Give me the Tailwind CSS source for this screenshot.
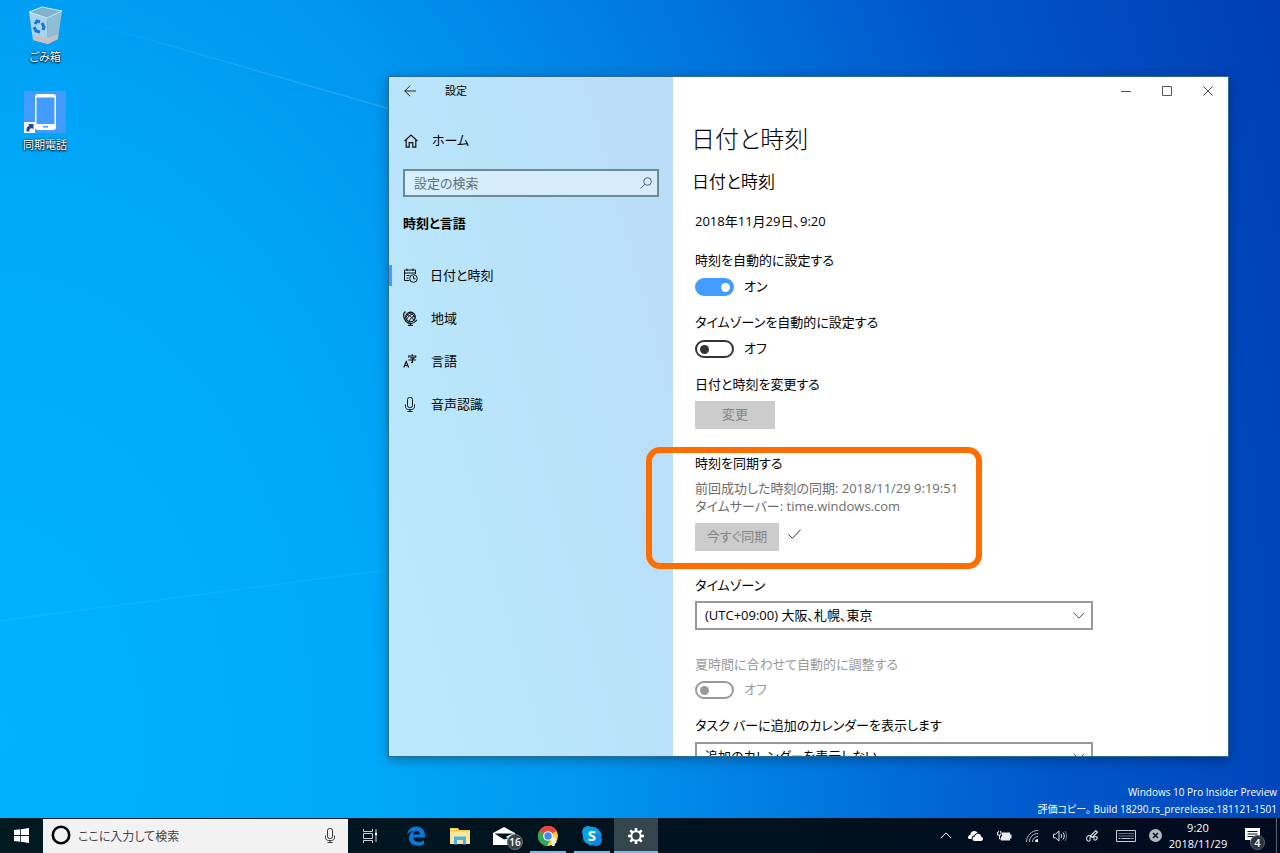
<!DOCTYPE html>
<html lang="ja">
<head>
    <meta charset="UTF-8">
    <meta name="viewport" content="width=device-width, initial-scale=1.0">
    <title>設定</title>
    <script src="https://cdn.jsdelivr.net/npm/@tailwindcss/browser@4"></script>
</head>
<body class="h-screen flex flex-col overflow-hidden font-['Open_Sans','Noto_Sans_CJK_JP',sans-serif] [font-feature-settings:'palt'] text-[13px] text-black">

    <!-- Desktop -->
    <main class="relative flex-1 min-h-0 bg-[radial-gradient(ellipse_112%_260%_at_0%_90%,#00b3fd_0%,#00a9f9_26%,#0096f0_41%,#0078de_57%,#0058ca_73%,#0042b8_92%,#003db2_100%)]">
        <svg class="absolute inset-0 w-full h-full" viewBox="0 0 1280 818" preserveAspectRatio="none" fill="#fff" aria-hidden="true">
            <path d="M60 14 L390 108 L390 110Z" fill-opacity=".12"/>
            <path d="M0 620 L390 569 L390 570 L0 622Z" fill-opacity=".06"/>
        </svg>

        <ul class="relative flex flex-col w-[90px] pt-[5px] gap-[26px] text-[11px] leading-4 text-white text-center [text-shadow:0_1px_2px_#000,0_0_2px_#000]">
            <li>
                <a href="#" class="flex flex-col items-center gap-1">
                    <svg class="w-10 h-10" viewBox="0 0 40 40" aria-hidden="true">
                        <path d="M4 7 L17 2 L37 6 L22 13Z" fill="#7fb3cf"/>
                        <path d="M4 7 L22 13 L23 39 L8 35Z" fill="#a9d3ea"/>
                        <path d="M22 13 L37 6 L33 34 L23 39Z" fill="#8fbdd6"/>
                        <path d="M8 30 L23 33 L33 29 L33 34 L23 39 L8 35Z" fill="#c9c0c2"/>
                        <path d="M4 7 L17 2 L37 6 L22 13Z" fill="none" stroke="#cfe4ef"/>
                        <g fill="none" stroke="#1578c8" stroke-width="3">
                            <path d="M10 19 L12 16 L15 17"/>
                            <path d="M17 18 L19 22 L18 25"/>
                            <path d="M15 27 L11 26 L9 22"/>
                        </g>
                    </svg>
                    <span>ごみ箱</span>
                </a>
            </li>
            <li>
                <a href="#" class="flex flex-col items-center gap-1">
                    <svg class="w-[42px] h-[42px]" viewBox="0 0 42 42" aria-hidden="true">
                        <rect width="42" height="42" fill="#429cff"/>
                        <path fill="#fff" fill-rule="evenodd" d="M14 3h15a3 3 0 0 1 3 3v30a3 3 0 0 1-3 3H14a3 3 0 0 1-3-3V6a3 3 0 0 1 3-3ZM12.500 6.500v26.500h18V6.500ZM19 35v1.500h5V35Z"/>
                        <rect x="0" y="31" width="11" height="11" fill="#f4f6f8"/>
                        <path d="M2.500 40.500c-.5-3.500.8-5.300 3-6L4 33h5.500v5.500L8 37c-2 .3-3 1.500-2.500 3.500Z" fill="#234a8c"/>
                    </svg>
                    <span>同期電話</span>
                </a>
            </li>
        </ul>

        <div class="absolute right-[3px] bottom-0 text-[10px] leading-[17px] text-white text-right">
            <p>Windows 10 Pro Insider Preview</p>
            <p>評価コピー。 Build 18290.rs_prerelease.181121-1501</p>
        </div>

        <!-- Settings window -->
        <div class="absolute left-[388px] right-[51px] top-[76px] bottom-[61px] flex border border-[#2f6a92] shadow-[0_3px_12px_rgba(0,0,0,0.3)]">
            <aside class="w-[284px] shrink-0 overflow-hidden bg-[linear-gradient(75deg,#b9eafb_0%,#b9e4fa_45%,#bbdcf7_100%)]">
                <div class="flex items-center h-7">
                    <button type="button" aria-label="戻る" class="w-[42px] h-7 grid place-items-center">
                        <svg class="w-3 h-3" viewBox="0 0 12 12" fill="none" stroke="#222" aria-hidden="true"><path d="M.5 6H12M6 .8.8 6 6 11.200"/></svg>
                    </button>
                    <span class="pl-[14px] text-[11px]">設定</span>
                </div>

                <a href="#" class="flex items-center h-8 mt-5 pl-[15px] gap-[14px]">
                    <svg class="w-[14px] h-[14px]" viewBox="0 0 14 14" fill="none" stroke="#111" stroke-width="1.200" aria-hidden="true"><path d="M.6 7 7 1l6.400 6M2.200 5.600v7.600h3V8.600h3.600v4.600h3V5.600"/></svg>
                    ホーム
                </a>

                <div class="relative mt-3 mx-[14px]">
                    <input type="text" aria-label="設定の検索" placeholder="設定の検索" class="block w-full h-7 pl-[9px] pr-8 border-2 border-[#6e8896] bg-white/40 placeholder:text-[#5f7079] outline-none">
                    <svg class="absolute right-[7px] top-2 w-3 h-3" viewBox="0 0 12 12" fill="none" stroke="#4e6470" aria-hidden="true"><circle cx="7.500" cy="4.500" r="3.800"/><path d="M4.800 7.200.5 11.500"/></svg>
                </div>

                <h2 class="mt-[14px] pl-[14px] leading-6 font-bold">時刻と言語</h2>

                <nav class="mt-[19px]">
                    <a href="#" class="relative flex items-center h-[43px] pl-[14px] gap-3" aria-current="page">
                        <span class="absolute left-0 w-[3px] h-[21px] bg-[#429cff]"></span>
                        <svg class="w-[15px] h-[15px]" viewBox="0 0 15 15" fill="none" stroke="#111" aria-hidden="true">
                            <path d="M6.500 12.500H1.500V2h11v4M1.500 5h11M4 .5V3M10 .5V3M3.500 7.500h3M3.500 10h2"/>
                            <circle cx="10.500" cy="10.500" r="3.800"/><path d="M10.500 8v2.800h2"/>
                        </svg>
                        日付と時刻
                    </a>
                    <a href="#" class="flex items-center h-[43px] pl-[14px] gap-[13px]">
                        <svg class="w-[15px] h-[15px]" viewBox="0 0 15 15" fill="none" stroke="#111" aria-hidden="true">
                            <circle cx="7.500" cy="6" r="4.800" stroke-width="1.200"/>
                            <path d="M3.500 3.500c3 .5 6 3 7.500 6M5.500 1.800c3 .5 5.500 2.500 6.500 5M11 2.500c-3 .5-6 3-7.500 6M12.200 5c-3 .5-5 2.500-6 5.500M8.500 1.200C6 2 4 4 2.900 6.500"/>
                            <path d="M2.500.5 1 2C-.2 6.500 2.500 12.300 7.800 12.500c2.200 0 3.700-.8 5-2.500l1-1M7.500 12.500v2M5 14.400h5" stroke-width="1.200"/>
                        </svg>
                        地域
                    </a>
                    <a href="#" class="flex items-center h-[43px] pl-[14px] gap-[13px]">
                        <svg class="w-[15px] h-[15px]" viewBox="0 0 15 15" fill="none" stroke="#111" stroke-width="1.200" aria-hidden="true">
                            <path d="M.8 13.500 3.200 7.500 5.600 13.500M1.700 11.500h3"/>
                            <path d="M9.200.3v1.500M5.700 3.500V2h7v1.500M7.200 3.800h4L9.400 5.200V8.500H8M5.300 6h7.800"/>
                        </svg>
                        言語
                    </a>
                    <a href="#" class="flex items-center h-[43px] pl-[14px] gap-[13px]">
                        <svg class="w-[15px] h-[15px]" viewBox="0 0 15 15" fill="none" stroke="#111" aria-hidden="true">
                            <rect x="4.500" y=".5" width="5" height="10" rx="2"/><path d="M2.500 7.500v2c0 2 1.500 3 3 3h3c1.500 0 3-1 3-3v-2M7 12.500v2M4.500 14.500h5"/>
                        </svg>
                        音声認識
                    </a>
                </nav>
            </aside>

            <section class="flex-1 min-w-0 overflow-hidden bg-white">
                <div class="flex justify-end h-7">
                    <button type="button" aria-label="最小化" class="w-[41px] grid place-items-center">
                        <svg class="w-[10px] h-[10px]" viewBox="0 0 10 10" stroke="#555" aria-hidden="true"><path d="M0 5.500h10"/></svg>
                    </button>
                    <button type="button" aria-label="最大化" class="w-[41px] grid place-items-center">
                        <svg class="w-[10px] h-[10px]" viewBox="0 0 10 10" fill="none" stroke="#555" aria-hidden="true"><path d="M.5.5h9v9h-9z"/></svg>
                    </button>
                    <button type="button" aria-label="閉じる" class="w-[41px] grid place-items-center">
                        <svg class="w-[10px] h-[10px]" viewBox="0 0 10 10" stroke="#444" aria-hidden="true"><path d="M.5.5l9 9M9.500.5l-9 9"/></svg>
                    </button>
                </div>

                <div class="pl-[22px] pr-[135px]">
                    <h1 class="mt-4 -ml-1 text-2xl leading-9 font-light">日付と時刻</h1>
                    <h2 class="mt-[11px] -ml-[3px] text-[17px] leading-7 font-[350]">日付と時刻</h2>
                    <p class="mt-[15px] leading-5">2018年11月29日、9:20</p>

                    <label for="autoTime" class="block mt-[19px] leading-5">時刻を自動的に設定する</label>
                    <div class="flex items-center gap-[10px] mt-2 h-[18px]">
                        <input type="checkbox" id="autoTime" checked class="appearance-none flex items-center justify-end w-[39px] h-[18px] px-1 rounded-full bg-[#429cff] before:content-[''] before:block before:w-[9px] before:h-[9px] before:rounded-full before:bg-white">
                        <span>オン</span>
                    </div>

                    <label for="autoZone" class="block mt-4 leading-5">タイムゾーンを自動的に設定する</label>
                    <div class="flex items-center gap-[10px] mt-2 h-[18px]">
                        <input type="checkbox" id="autoZone" class="appearance-none flex items-center w-[39px] h-[18px] px-[3px] border-2 border-[#333] rounded-full before:content-[''] before:block before:w-[9px] before:h-[9px] before:rounded-full before:bg-[#333]">
                        <span>オフ</span>
                    </div>

                    <p class="mt-4 leading-5">日付と時刻を変更する</p>
                    <button type="button" disabled class="block mt-[7px] w-20 h-7 bg-[#ccc] text-[#858585]">変更</button>

                    <h3 class="mt-6 leading-5">時刻を同期する</h3>
                    <p class="mt-[6px] leading-[18px] text-[#6d6d6d]">前回成功した時刻の同期: 2018/11/29 9:19:51<br>タイムサーバー: time.windows.com</p>
                    <div class="flex mt-2 gap-[9px]">
                        <button type="button" disabled class="w-[84px] h-7 bg-[#ccc] text-[#858585]">今すぐ同期</button>
                        <svg class="w-[13px] h-[10px] mt-[6px]" viewBox="0 0 13 10" fill="none" stroke="#333" aria-hidden="true"><path d="M.5 5.500 4.500 9.300 12.700.6"/></svg>
                    </div>

                    <label for="timezone" class="block mt-6 leading-5">タイムゾーン</label>
                    <div class="relative mt-[6px]">
                        <select id="timezone" class="appearance-none block w-full h-[29px] pl-2 pr-8 border-2 border-[#999] bg-white">
                            <option>(UTC+09:00) 大阪、札幌、東京</option>
                        </select>
                        <svg class="absolute right-2 top-[11px] w-3 h-[7px]" viewBox="0 0 12 7" fill="none" stroke="#555" aria-hidden="true"><path d="M.7.8 6 6.100 11.300.8"/></svg>
                    </div>

                    <label for="dst" class="block mt-6 leading-5 text-[#999]">夏時間に合わせて自動的に調整する</label>
                    <div class="flex items-center gap-[10px] mt-[7px] h-[18px] text-[#999]">
                        <input type="checkbox" id="dst" disabled class="appearance-none flex items-center w-[39px] h-[18px] px-[3px] border-2 border-[#999] rounded-full before:content-[''] before:block before:w-[9px] before:h-[9px] before:rounded-full before:bg-[#999]">
                        <span>オフ</span>
                    </div>

                    <label for="calendar" class="block mt-4 leading-5">タスク バーに追加のカレンダーを表示します</label>
                    <div class="relative mt-[7px]">
                        <select id="calendar" class="appearance-none block w-full h-[29px] pl-2 pr-8 border-2 border-[#999] bg-white">
                            <option>追加のカレンダーを表示しない</option>
                        </select>
                        <svg class="absolute right-2 top-[11px] w-3 h-[7px]" viewBox="0 0 12 7" fill="none" stroke="#555" aria-hidden="true"><path d="M.7.8 6 6.100 11.300.8"/></svg>
                    </div>
                </div>
            </section>

            <!-- Highlight around the sync section -->
            <div class="absolute left-[257px] top-[370px] w-[336px] h-[122px] border-6 border-[#ff6c00] rounded-[14px] pointer-events-none"></div>
        </div>
    </main>

    <!-- Taskbar -->
    <footer class="flex h-[35px] shrink-0 bg-[linear-gradient(90deg,#001a22_0%,#00131f_50%,#000b20_100%)] text-white">
        <button type="button" aria-label="スタート" class="w-[43px] grid place-items-center">
            <svg class="w-[15px] h-[15px]" viewBox="0 0 15 15" fill="#fff" aria-hidden="true"><path d="M0 2.100 6.200 1.300V7.100H0zM7 1.200 15 0V7.100H7zM0 7.900H6.200V13.700L0 12.900zM7 7.900H15V15L7 13.800z"/></svg>
        </button>
        <div class="relative w-[305px] mt-px">
            <input type="text" aria-label="ここに入力して検索" placeholder="ここに入力して検索" class="block w-full h-full pl-[35px] pr-9 bg-[#f2f2f2] text-xs text-black placeholder:text-[#444] outline-none">
            <svg class="absolute left-2 top-[6px] w-5 h-5" viewBox="0 0 20 20" fill="none" stroke="#000" stroke-width="2.600" aria-hidden="true"><circle cx="10" cy="10" r="8.200"/></svg>
            <svg class="absolute right-[10px] top-[9px] w-[15px] h-[15px]" viewBox="0 0 15 15" fill="none" stroke="#333" aria-hidden="true"><rect x="4.500" y=".5" width="5" height="10" rx="2"/><path d="M2.500 7.500v2c0 2 1.500 3 3 3h3c1.500 0 3-1 3-3v-2M7 12.500v2M4.500 14.500h5"/></svg>
        </div>

        <button type="button" aria-label="タスク ビュー" class="w-11 grid place-items-center">
            <svg class="w-4 h-4" viewBox="0 0 16 16" fill="none" stroke="#c9d0d3" aria-hidden="true"><path d="M1.500 1v2.500h9V1M1.500 15v-2.500h9V15M1.500 5.500h9v5h-9zM14 1v3M14 8v6"/><path d="M14 4.500v3" stroke="#fff" stroke-width="2"/></svg>
        </button>
        <div class="flex ml-0.5">
            <button type="button" aria-label="Microsoft Edge" class="w-11 grid place-items-center">
                <svg class="w-[18px] h-5" viewBox="0 0 18 20" fill="#0a7ad8" aria-hidden="true"><path d="M0 9C1 3.500 4.500.5 9.300.5 14.500.5 18 4 18 9.300V11.600H6.200C6.400 14.300 8.600 15.900 11.500 15.900 13.600 15.900 15.400 15.300 17 14.400V18.200C15.200 19.200 13.100 19.700 10.600 19.700 5.300 19.700 2 16.600 2 12.100 2 9 3.700 6.500 6.500 5.100 4 5.300 1.800 6.500 0 9ZM6.300 8.400H12.900C12.900 6 11.700 4.700 9.700 4.700 7.800 4.700 6.500 6.200 6.300 8.400Z"/></svg>
            </button>
            <button type="button" aria-label="エクスプローラー" class="w-11 grid place-items-center">
                <svg class="w-5 h-[18px]" viewBox="0 0 20 18" aria-hidden="true"><path d="M0 1h8l1.500 2H20v14H0z" fill="#f5c84b"/><path d="M0 4.500h20V17H0z" fill="#fde69b"/><path d="M4 17.500V9.500h12v8h-3V13H7v4.500z" fill="#46b4e6"/><path d="M1.500 2h5v1h-5z" fill="#fff"/></svg>
            </button>
            <button type="button" aria-label="メール" class="relative w-11 grid place-items-center">
                <svg class="w-[22px] h-[18px]" viewBox="0 0 22 18" aria-hidden="true"><path d="M0 6 11 0l11 6v12H0z" fill="#fff"/><path d="M1.500 6.500h18.500l-7 3.300 2 1.800-4 .8z" fill="#00141e"/></svg>
                <span class="absolute right-[3px] bottom-[3px] grid place-items-center w-4 h-4 rounded-full bg-[#3a4448] border border-[#6a7276] text-[10px] leading-none font-semibold">16</span>
            </button>
            <button type="button" aria-label="Google Chrome" class="relative w-11 grid place-items-center">
                <svg class="w-5 h-5" viewBox="0 0 20 20" aria-hidden="true">
                    <circle cx="10" cy="10" r="10" fill="#fdd13b"/>
                    <path d="M10 10 1.300 5A10 10 0 0 1 18.700 5z" fill="#e5473b"/><path d="M10 0a10 10 0 0 1 8.700 5H10z" fill="#e5473b"/>
                    <path d="M1.300 5A10 10 0 0 0 9 20l4-7-3-3z" fill="#35a853"/>
                    <circle cx="10" cy="10" r="4.800" fill="#fff"/><circle cx="10" cy="10" r="3.700" fill="#4486f4"/>
                    <path d="M13 13c0-2 4-3 5 0l.5 4-1.500.5-.5 2.500h-2.500z" fill="#eef0ee"/>
                </svg>
                <span class="absolute bottom-0 inset-x-1 h-[2px] bg-[#76b9ed]"></span>
            </button>
            <button type="button" aria-label="Skype" class="relative w-11 grid place-items-center">
                <span class="relative grid place-items-center w-5 h-5">
                    <svg class="absolute inset-0 w-5 h-5" viewBox="0 0 20 20" fill="#0aa0e8" aria-hidden="true"><circle cx="10" cy="10" r="9.300"/><circle cx="6" cy="6" r="6"/><circle cx="14" cy="14" r="6" fill="#0b8be0"/></svg>
                    <span class="relative text-[15px] leading-none font-bold">S</span>
                </span>
                <span class="absolute bottom-0 inset-x-1 h-[2px] bg-[#76b9ed]"></span>
            </button>
            <button type="button" aria-label="設定" class="relative w-11 grid place-items-center bg-[#34454e]">
                <svg class="w-4 h-4" viewBox="0 0 16 16" fill="none" stroke="#fff" aria-hidden="true"><circle cx="8" cy="8" r="4.700" stroke-width="2"/><path stroke-width="2.600" d="M8 0v3M8 13v3M0 8h3M13 8h3M2.300 2.300l2.200 2.200M11.500 11.500l2.200 2.200M2.300 13.700l2.200-2.200M11.500 4.500l2.200-2.200"/></svg>
                <span class="absolute bottom-0 inset-x-0 h-[2px] bg-[#76b9ed]"></span>
            </button>
        </div>

        <div class="flex ml-auto">
            <button type="button" aria-label="隠れているインジケーターを表示します" class="w-7 grid place-items-center">
                <svg class="w-3 h-[7px]" viewBox="0 0 12 7" fill="none" stroke="#fff" aria-hidden="true"><path d="M.7 6.200 6 .9l5.300 5.300"/></svg>
            </button>
            <button type="button" aria-label="OneDrive" class="w-[30px] grid place-items-center">
                <svg class="w-[15px] h-[10px]" viewBox="0 0 15 10" fill="#fff" aria-hidden="true"><path d="M0 6.500C0 4.800 1.200 4 2.200 4 2.500 1.500 4.300 0 6.200 0 8 0 9 .8 9.800 2 8 2 6.700 3 6.200 4.500 4.500 4.700 3.500 6 3.600 8H1.500C.6 8 0 7.300 0 6.500z"/><path d="M4.500 7.800C4.500 6.300 5.600 5.400 6.900 5.400 7.300 3.700 8.500 2.800 10 2.800 11.800 2.800 13 4 13.100 5.700 14.200 5.800 15 6.600 15 7.800 15 9 14.200 10 13 10H6.600C5.300 10 4.500 9 4.500 7.800z"/></svg>
            </button>
            <button type="button" aria-label="バッテリー" class="w-7 grid place-items-center">
                <svg class="w-[15px] h-[10px]" viewBox="0 0 15 10" fill="#e8ecee" aria-hidden="true"><path d="M5 1.500h8v2h1.500v4H13v2H4v-4h1z"/><path d="M.5 1v3h3.500V1M1.500 0v1.500M3.500 0v1.500M2.500 4v4H4" fill="none" stroke="#e8ecee"/></svg>
            </button>
            <button type="button" aria-label="ネットワーク" class="w-7 grid place-items-center">
                <svg class="w-3 h-3" viewBox="0 0 12 12" fill="none" stroke="#b9c0c8" aria-hidden="true"><path d="M.5 12C.5 5.500 5.500.5 12 .5M3.500 12C3.500 7 7 3.500 12 3.500M6.500 12C6.500 9 9 6.500 12 6.500"/><path d="M9 12c0-1.700 1.300-3 3-3v3z" fill="#fff" stroke="none"/></svg>
            </button>
            <button type="button" aria-label="音量" class="w-7 grid place-items-center">
                <svg class="w-[14px] h-3" viewBox="0 0 14 12" fill="none" stroke="#e4e8ee" aria-hidden="true"><path d="M.5 4.200h2L6 1v10L2.500 7.800h-2zM8 4c.9 1.200.9 2.800 0 4M10 2.500c1.700 2.200 1.700 4.800 0 7"/><path d="M12 1c2 3.500 2 6.500 0 10" stroke="#7a8290"/></svg>
            </button>
            <button type="button" aria-label="Windows Ink ワークスペース" class="w-9 grid place-items-center">
                <svg class="w-3 h-3" viewBox="0 0 12 12" fill="none" stroke="#e4e8ee" stroke-width="1.100" aria-hidden="true"><path d="M9.800.6 11.400 2.200 6.200 7.400 4.600 5.800zM4.600 5.800C2 5.200.6 6.500.6 8.500c0 2.300 1.900 3.400 3.200 2.200 1.200-1.200-.8-2.500 1-4M6.200 7.400c1.300.6 3-1.600 4.600-.6.9 1-.2 3.300-1.700 3.400-1.300 0-1.500-1.300-.7-1.900"/></svg>
            </button>
            <button type="button" aria-label="タッチ キーボード" class="w-8 grid place-items-center">
                <svg class="w-5 h-3" viewBox="0 0 20 12" fill="none" stroke="#c9cdd5" aria-hidden="true"><path d="M.5.5h19v11H.5z"/><path d="M2.500 3.500h15M2.500 6h15" stroke-dasharray="1 1"/><path d="M2.500 8.500h2M5.500 8.500h9M15.500 8.500h2"/></svg>
            </button>
            <button type="button" aria-label="IME 無効" class="w-[26px] grid place-items-center">
                <svg class="w-[13px] h-[13px]" viewBox="0 0 13 13" aria-hidden="true"><circle cx="6.500" cy="6.500" r="6.500" fill="#b3b8bf"/><path d="M4 4l5 5M9 4 4 9" stroke="#0a1424" stroke-width="1.600"/></svg>
            </button>
            <button type="button" class="w-[60px] text-[11px] leading-4">9:20<br>2018/11/29</button>
            <button type="button" aria-label="通知" class="relative w-12 grid place-items-center">
                <svg class="w-[15px] h-[15px]" viewBox="0 0 15 15" aria-hidden="true"><path d="M0 0h15v12H8l-3 3v-3H0z" fill="#fff"/><path d="M2.500 3.500h10M2.500 6h10M2.500 8.500h6" stroke="#0a1424"/></svg>
                <span class="absolute right-[11px] bottom-[3px] grid place-items-center w-[15px] h-[15px] rounded-full bg-[#2b3340] border border-[#5c6470] text-[11px] leading-none font-semibold">4</span>
            </button>
            <button type="button" aria-label="デスクトップの表示" class="w-1 border-l border-[#5f6672]"></button>
        </div>
    </footer>
</body>
</html>
